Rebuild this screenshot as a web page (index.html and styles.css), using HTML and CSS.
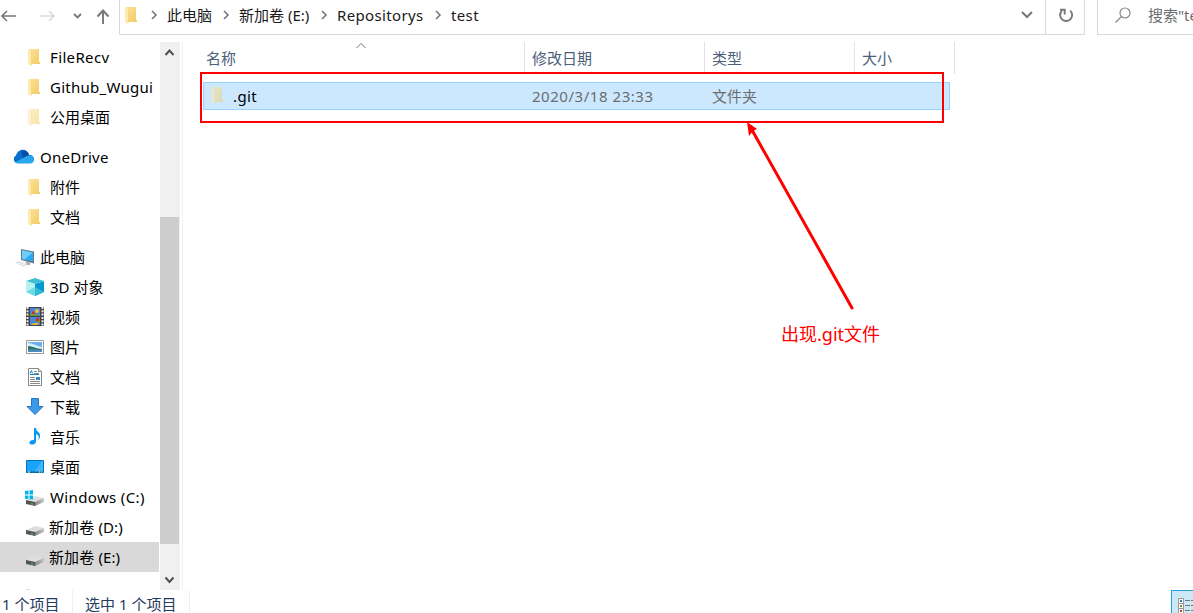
FILE: index.html
```html
<!DOCTYPE html>
<html lang="zh-CN">
<head>
<meta charset="utf-8">
<title>test</title>
<link rel="stylesheet" href="styles.css">
</head>
<body>
<svg class="defs" width="0" height="0" aria-hidden="true">
  <defs>
    <linearGradient id="gold" x1="0" x2="1" y2="1"><stop offset="0" stop-color="#fbe39a"/><stop offset="1" stop-color="#f3cc61"/></linearGradient>
    <linearGradient id="metal"><stop offset="0" stop-color="#858585"/><stop offset="1" stop-color="#c9c9c9"/></linearGradient>
  </defs>
  <symbol id="folder" viewBox="0 0 20 20"><path d="M4 2h10v13h1v2H5z" fill="url(#gold)"/><path d="M3 2.500l3.500 1.500v14l-.8 1-2.700-2z" fill="#ffe9ae"/><path d="M6.500 4v14" stroke="#edcb72" stroke-width=".5"/></symbol>
  <symbol id="drive" viewBox="0 0 20 20"><path d="M1 13l9-4 9 2-9 4z" fill="#dedede"/><path d="M1 13l9 2v4l-9-2z" fill="#555"/><path d="M10 15l9-4v4l-9 4z" fill="url(#metal)"/><path d="M6 16l2 .5v1.500l-2-.5z" fill="#32c832"/></symbol>
</svg>
<div class="explorer">
  <header class="toolbar">
    <nav class="history">
      <svg width="119" height="34" fill="none" stroke-width="1.600">
        <path d="M16 16H2M7 11l-5 5 5 5" stroke="#777"/>
        <path d="M40 16h14M49 11l5 5-5 5" stroke="#ddd"/>
        <path d="M74 14l3.500 3.500L81 14" stroke="#777" stroke-width="1.800"/>
        <path d="M103 24V11M97.500 16.500l5.500-6 5.500 6" stroke="#777" stroke-width="1.900"/>
      </svg>
    </nav>
    <div class="address">
      <svg class="address-folder" width="20" height="20"><use href="#folder"/></svg>
      <svg class="chev" width="8" height="10"><path d="M2 1l4 4-4 4"/></svg>
      <span class="crumb c1">此电脑</span>
      <svg class="chev" width="8" height="10"><path d="M2 1l4 4-4 4"/></svg>
      <span class="crumb c2">新加卷 (E:)</span>
      <svg class="chev" width="8" height="10"><path d="M2 1l4 4-4 4"/></svg>
      <span class="crumb c3 latin">Repositorys</span>
      <svg class="chev" width="8" height="10"><path d="M2 1l4 4-4 4"/></svg>
      <span class="crumb c4 latin">test</span>
      <svg class="expand" width="14" height="10"><path d="M2 2l5 5 5-5" fill="none" stroke="#777" stroke-width="2"/></svg>
    </div>
    <div class="refresh"><svg width="17" height="17" fill="none" stroke="#777" stroke-width="1.900"><path d="M12.200 3.600a6 6 0 1 1-8.400.3M2 2.800h4.700v4.700"/></svg></div>
    <div class="search">
      <svg width="18" height="18" fill="none" stroke="#888" stroke-width="1.200"><circle cx="11" cy="6" r="5"/><path d="M7.500 9.500L1.500 15.500"/></svg>
      <span>搜索"test"</span>
    </div>
  </header>
  <div class="content">
    <aside class="tree">
      <div class="node sub"><svg class="icon"><use href="#folder"/></svg><span class="latin">FileRecv</span></div>
      <div class="node sub"><svg class="icon"><use href="#folder"/></svg><span class="github">Github_Wugui</span></div>
      <div class="node sub"><svg class="icon faded"><use href="#folder"/></svg><span>公用桌面</span></div>
      <div class="node root"><svg class="icon" viewBox="0 0 20 20"><path d="M3 16a4 4 0 0 1-1-7.500C3 5 6 2.500 9 2.800c3 0 5 2 6 5 7 .5 6 8.500 1 8.500H3z" fill="#0870cf"/><path d="M7 4.500a5 5 0 0 1 8 3.500l-6 3z" fill="#064ea6"/><path d="M3 16.300c-1.500 0-2-.7-2-.7L9 11l5-2.500c5-.5 7 4 5 6.500-1 1.300-2 1.300-3 1.300z" fill="#28a8ea"/></svg><span class="onedrive">OneDrive</span></div>
      <div class="node sub"><svg class="icon"><use href="#folder"/></svg><span>附件</span></div>
      <div class="node sub"><svg class="icon"><use href="#folder"/></svg><span>文档</span></div>
      <div class="node root"><svg class="icon" viewBox="0 0 20 20"><path d="M7 2l13 2.500v12L7 13z" fill="#667b8a"/><path d="M8 3.200l11 2.200v9L8 12z" fill="#28aaf1"/><path d="M8 3.200l11 2.200-8.500 7.200L8 12z" fill="#6dcdfa"/><path d="M12 14.500l4 1v2.500h-5z" fill="#a3aab0"/><path d="M1 16l4-2 9 3-4 2.500z" fill="#d5dae0"/><path d="M3 16l8 2M5 15l7 2" stroke="#fff" stroke-width=".6"/></svg><span>此电脑</span></div>
      <div class="node sub"><svg class="icon" viewBox="0 0 20 20"><path d="M1 4l9-3 9 3-9 3z" fill="#3ebdd3"/><path d="M1 4l9 3v12l-9-4z" fill="#b6f0f1"/><path d="M10 7l9-3v11l-9 4z" fill="#0798cf"/><path d="M1 15l9-5v9z" fill="#6bdbe0"/><path d="M10 10l9 5-9 4z" fill="#38bad7"/></svg><span>3D 对象</span></div>
      <div class="node sub"><svg class="icon" viewBox="0 0 20 20"><path d="M1 0h18v19H1z" fill="#444"/><path d="M5 1h10v8H5zM5 10h10v8H5z" fill="#4e83da"/><path d="M2.500 0v19M17.500 0v19" stroke="#eee" stroke-width="2" stroke-dasharray="2 1.300"/><path d="M5 7l3-1 7 3H5zM9 14l6-2v4z" fill="#70993b"/><circle cx="12" cy="4" r="2" fill="#efbd2d"/><path d="M7 5l2-1 1 3H7zM11 11h3v3h-3z" fill="#c73520"/><path d="M6 17l4-1 4 0-2 2H7z" fill="#e6b72e"/></svg><span>视频</span></div>
      <div class="node sub"><svg class="icon" viewBox="0 0 20 20"><path d="M1.500 3.500h17v13h-17z" fill="#fff" stroke="#999"/><path d="M3 5h14v10H3z" fill="#6caee7"/><path d="M3 6c5 0 8 3 14 4v5H3z" fill="#d3effa"/><path d="M3 9c5 0 8 3 14 3v3H3z" fill="#317264"/><path d="M3 13c6-1 9 0 14 0v2H3z" fill="#4b8bbd"/></svg><span>图片</span></div>
      <div class="node sub"><svg class="icon" viewBox="0 0 20 20"><path d="M3.500 1.500h10l3 3v14h-13z" fill="#fff" stroke="#888"/><path d="M13.500 1.500v3h3" fill="#ddd" stroke="#888"/><path d="M9 4.500h3M9 6.500h5M5 10.500h5M5 12.500h5M5 14.500h10M5 16.500h10" stroke="#8b8b8b"/><path d="M5 7.500h9M5 6.500l1.500-3 1 3" fill="none" stroke="#1687cf"/><path d="M11 10h4v3h-4z" fill="#318ccd"/></svg><span>文档</span></div>
      <div class="node sub"><svg class="icon" viewBox="0 0 20 20"><path d="M6.500 1.500h7v8h4.500l-8 8-8-8h4.500z" fill="#3b99e8" stroke="#2478c2"/></svg><span>下载</span></div>
      <div class="node sub"><svg class="icon" viewBox="0 0 20 20"><path d="M9 1h2c0 4 5 4 4 9-1 3-2 3-2 3 2-4 0-5-2-6v7c0 3-3 4-5 3.500-3-1-1.500-5 3-4.500z" fill="#0898f3"/></svg><span>音乐</span></div>
      <div class="node sub"><svg class="icon" viewBox="0 0 20 20"><path d="M1.500 3.500h17v12h-17z" fill="#18a4fb" stroke="#0872b9"/><path d="M9 15L17 4h1v11z" fill="#42b4fa"/><path d="M2 15h16" stroke="#075a92"/><path d="M3 15h2M14 15h1M16 15h1" stroke="#fff"/></svg><span>桌面</span></div>
      <div class="node sub"><svg class="icon" viewBox="0 0 20 20"><use href="#drive"/><path d="M0 4l3.500-.5v4H0zM4.500 3.400L8 3v4.500H4.500zM0 8.500h3.500v3.500L0 11.700zM4.500 8.500H8v4l-3.500-.5z" fill="#00b6ef"/></svg><span class="windows">Windows (C:)</span></div>
      <div class="node sub"><svg class="icon"><use href="#drive"/></svg><span class="volume">新加卷 (D:)</span></div>
      <div class="node sub selected"><svg class="icon"><use href="#drive"/></svg><span class="volume">新加卷 (E:)</span></div>
      <div class="node sub network"><svg class="icon" viewBox="0 0 20 20"><path d="M-1 4a4.500 2.600 0 0 1 8 0z" fill="#4ca7c9"/></svg></div>
    </aside>
    <div class="scrollbar">
      <svg width="20" height="20"><path d="M5.500 13l4-4.500 4 4.500" fill="none" stroke="#505050" stroke-width="2"/></svg>
      <div class="thumb"></div>
      <svg class="down" width="20" height="20"><path d="M5.500 7.500l4 4.500 4-4.500" fill="none" stroke="#505050" stroke-width="2"/></svg>
    </div>
    <main class="files">
      <div class="columns">
        <div class="col name">名称<svg class="sort" width="12" height="7"><path d="M1.500 6l4.500-4.500 4.500 4.500" fill="none" stroke="#777"/></svg></div>
        <div class="col date">修改日期</div><div class="col type">类型</div><div class="col size">大小</div>
      </div>
      <div class="file">
        <svg class="icon hidden-folder"><use href="#folder"/></svg>
        <span class="filename">.git</span><span class="filedate">2020/3/18 23:33</span><span>文件夹</span>
      </div>
    </main>
  </div>
  <footer class="status"><span class="count">1 个项目</span><span class="chosen">选中 1 个项目</span>
    <div class="view"><svg width="22" height="23"><path d="M6.500 7.500h5v5h-5zM6.500 12.500h5v5h-5zM6.500 17.500h5v5h-5z" fill="#fff" stroke="#999"/><path d="M13 9.500h5M19 9.500h3M13 14.500h5M19 14.500h3M13 19.500h5M19 19.500h3" stroke="#777"/><path d="M8 9h2v2H8z" fill="#287fa8"/><path d="M8 14h2v2H8z" fill="#81952b"/><path d="M8 19h2v2H8z" fill="#c3421e"/></svg></div>
  </footer>
  <div class="highlight"></div>
  <svg class="arrow" width="120" height="200"><path d="M112 187L12 9" fill="none" stroke="#f00" stroke-width="3" stroke-linecap="round"/><path d="M7 1l10 7-4 2-4 5z" fill="#f00"/></svg>
  <div class="note">出现.git文件</div>
</div>
</body>
</html>
```
FILE: styles.css
```css
* { box-sizing: border-box; }
body { margin: 0; background: #fff; color: #000; font: 15px/30px "Noto Sans", "Noto Sans CJK SC", sans-serif; overflow: hidden; }
svg { display: block; flex-shrink: 0; }
.defs { position: absolute; }
.explorer { position: relative; width: 1193px; height: 613px; overflow: hidden; display: flex; flex-direction: column; white-space: nowrap; }
.latin, .windows { letter-spacing: .36px; }
.github, .onedrive { letter-spacing: .26px; }
.volume { letter-spacing: .12px; margin-left: -1px; }
.toolbar { height: 35px; display: flex; flex-shrink: 0; }
.history { width: 119px; }
.address { width: 927px; border: 1px solid #d9d9d9; border-top: 0; display: flex; align-items: center; padding: 0 11px 4px 2px; color: #1a1a1a; }
.address-folder { margin-right: 8px; }
.chev { fill: none; stroke: #777; stroke-width: 1.6; }
.crumb { flex-shrink: 0; margin-left: 9px; }
.c1 { width: 55px; }
.c2 { width: 81px; }
.c3 { width: 97px; }
.expand { margin-left: auto; }
.refresh { width: 39px; border: 1px solid #d9d9d9; border-width: 0 1px 1px 0; padding: 7px 0 0 12px; }
.search { width: 96px; margin-left: 12px; border: 1px solid #d9d9d9; border-width: 0 0 1px 1px; display: flex; padding: 0 0 0 16px; gap: 16px; color: #6d6d6d; overflow: hidden; }
.search svg { margin-top: 7px; }
.content { height: 548px; margin-top: 7px; display: flex; }
.tree { width: 160px; overflow: hidden; display: flex; flex-direction: column; }
.node { height: 30px; width: 159px; flex-shrink: 0; display: flex; align-items: center; gap: 5px; }
.icon { width: 20px; height: 20px; }
.sub { padding-left: 25px; }
.root { padding-left: 14px; gap: 6px; margin-top: 10px; }
.faded { opacity: .55; }
.selected { background: #d9d9d9; }
.network { margin-top: 10px; }
.scrollbar { width: 20px; background: #f0f0f0; display: flex; flex-direction: column; }
.thumb { width: 19px; height: 327px; margin-top: 155px; background: #cdcdcd; }
.down { margin-top: auto; }
.files { width: 1011px; margin-left: 2px; border-left: 1px solid #f1f1f1; }
.columns { display: flex; height: 32px; padding-left: 15px; color: #4c607a; line-height: 33px; }
.col { border-right: 1px solid #e2e2e2; padding-left: 7px; height: 32px; }
.name { width: 327px; padding-left: 8px; position: relative; }
.sort { position: absolute; left: 157px; top: 0; }
.date { width: 180px; }
.type { width: 150px; }
.size { width: 100px; }
.file { width: 747px; height: 28px; margin: 8px 0 0 20px; border: 1px solid #99d1ff; background: #cce8ff; display: flex; align-items: center; padding-left: 4px; color: #6d6d6d; }
.hidden-folder { opacity: .5; margin-top: -3px; }
.filename { width: 304px; padding-left: 5px; color: #000; letter-spacing: .4px; }
.filedate { width: 180px; letter-spacing: .54px; }
.status { height: 23px; display: flex; line-height: 28px; color: #243a5e; }
.count { width: 73px; padding-left: 2px; border-right: 1px solid #f0f0f0; }
.chosen { width: 117px; padding-left: 12px; border-right: 1px solid #f0f0f0; }
.view { width: 22px; margin-left: auto; border: 1px solid #26a0da; border-width: 1px 0 0 1px; background: #cce8f6; overflow: hidden; }
.highlight { position: absolute; left: 200px; top: 72px; width: 744px; height: 51px; border: 2px solid #f00; }
.arrow { position: absolute; left: 740px; top: 121px; }
.note { position: absolute; left: 781px; top: 319px; color: #f00; font-size: 18px; }
```
